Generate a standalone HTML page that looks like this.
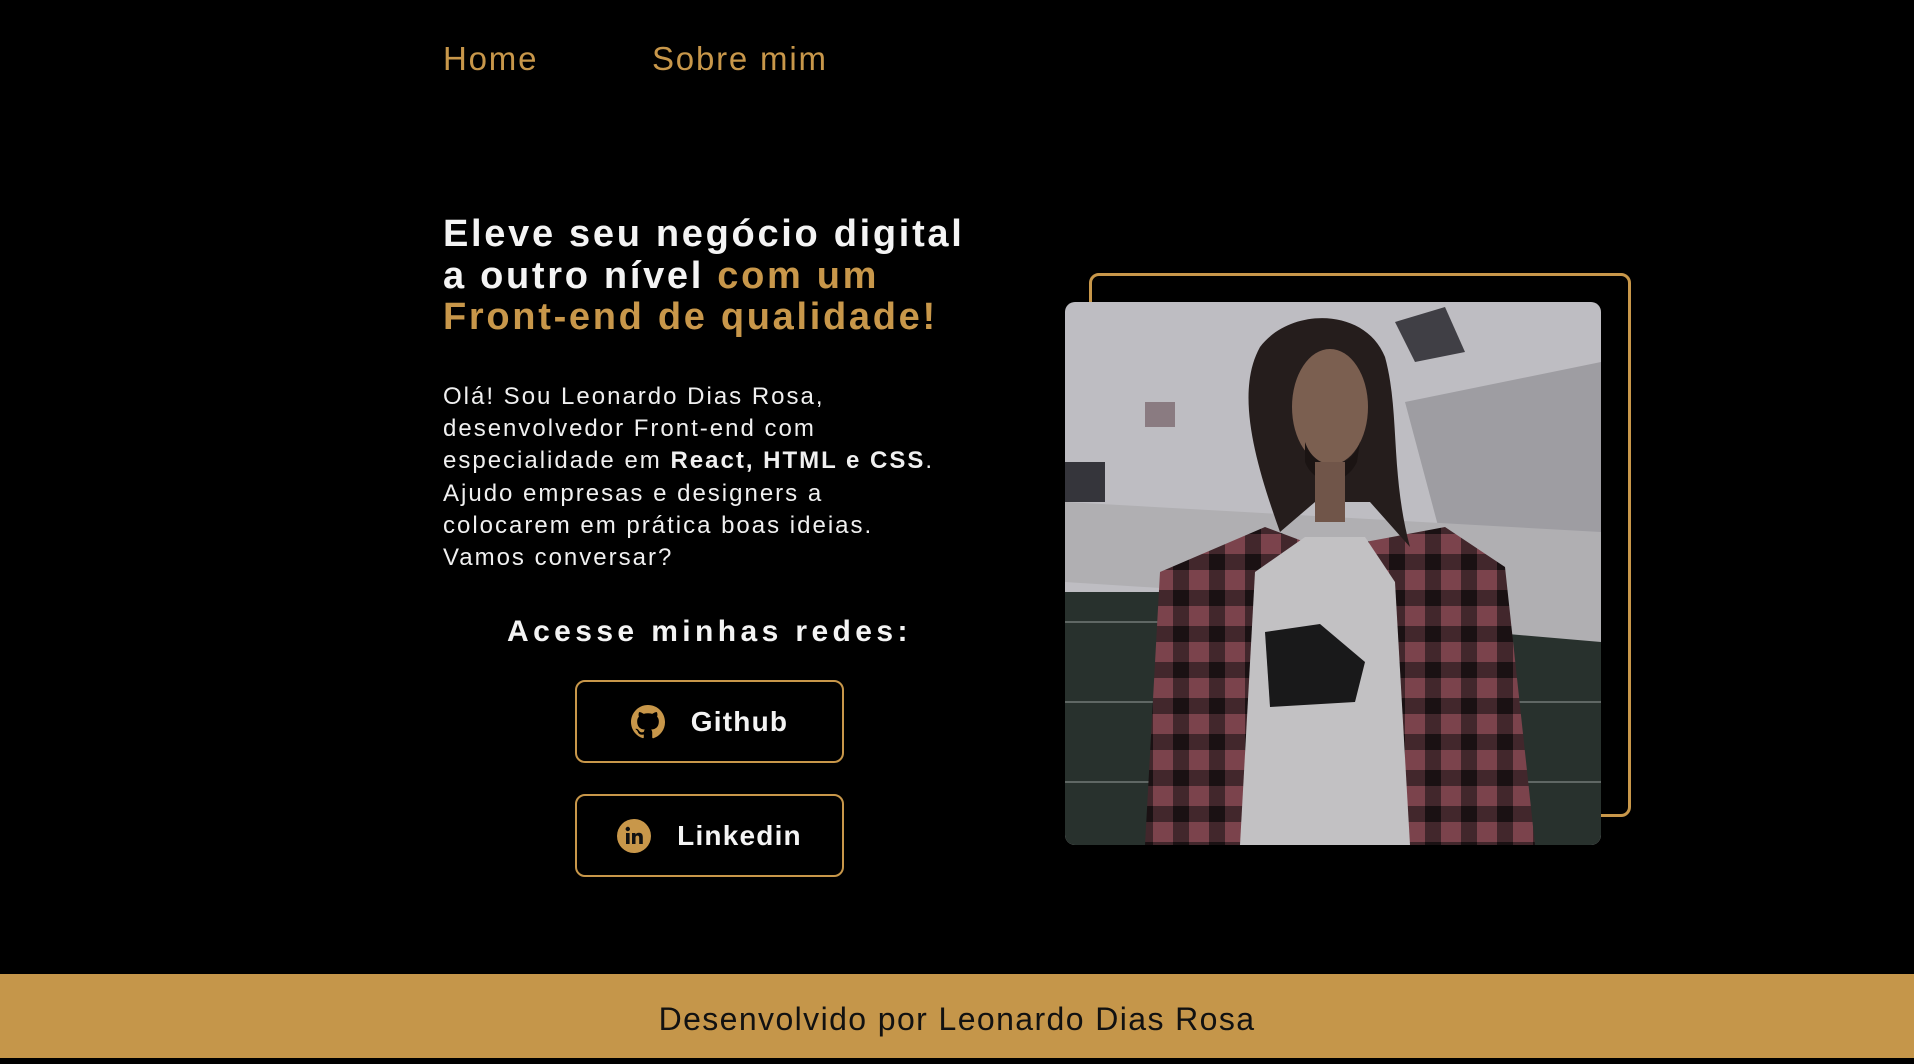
<!DOCTYPE html>
<html><head><meta charset="utf-8">
<style>
*{margin:0;padding:0;box-sizing:border-box}
html,body{width:1914px;height:1058px;background:#000;overflow:hidden;font-family:"Liberation Sans",sans-serif;color:#f4f4f4}
.nav a{position:absolute;top:40px;font-size:33px;color:#c8974a;text-decoration:none;letter-spacing:1.8px;font-weight:500}
h1{position:absolute;left:443px;top:214px;font-size:38px;line-height:41.5px;font-weight:bold;letter-spacing:2.7px;width:620px}
h1 span{color:#c8974a}
p.intro{position:absolute;left:443px;top:381px;font-size:24px;line-height:32.2px;letter-spacing:2px;width:620px;color:#f0f0f0}
p.intro b{font-weight:bold}
.redes{position:absolute;left:507px;top:615px;font-size:30px;font-weight:bold;letter-spacing:4.4px;white-space:nowrap}
.btn{position:absolute;left:575px;width:269px;height:83px;border:2px solid #c8974a;border-radius:10px;display:flex;align-items:center;justify-content:center;font-size:28px;font-weight:bold;letter-spacing:1.2px}
.btn svg{margin-right:26px}
.frame{position:absolute;left:1089px;top:273px;width:542px;height:544px;border:3px solid #c8974a;border-radius:10px}
.photo{position:absolute;left:1065px;top:302px;width:536px;height:543px;border-radius:10px;overflow:hidden}
footer{position:absolute;left:0;top:974px;width:1914px;height:84px;background:#c5964a;color:#111;font-size:32px;letter-spacing:1.4px;text-align:center;line-height:90px}
</style></head><body>
<div class="nav"><a style="left:443px">Home</a><a style="left:652px">Sobre mim</a></div>
<h1>Eleve seu negócio digital<br>a outro nível <span>com um<br>Front-end de qualidade!</span></h1>
<p class="intro">Olá! Sou Leonardo Dias Rosa,<br>desenvolvedor Front-end com<br>especialidade em <b>React, HTML e CSS</b>.<br>Ajudo empresas e designers a<br>colocarem em prática boas ideias.<br>Vamos conversar?</p>
<div class="redes">Acesse minhas redes:</div>
<div class="btn" style="top:680px"><svg width="34" height="34" viewBox="0 0 16 16"><path fill="#c8974a" d="M8 0C3.58 0 0 3.580 0 8c0 3.54 2.29 6.53 5.47 7.59.4.07.55-.17.55-.38v-1.33c-2.23.48-2.7-1.07-2.7-1.07-.36-.92-.89-1.17-.89-1.17-.73-.5.05-.49.05-.49.8.06 1.23.83 1.230.83.71 1.23 1.87.87 2.33.66.07-.52.28-.87.51-1.070-1.78-.2-3.650-.89-3.65-3.95 0-.87.31-1.59.82-2.15-.08-.2-.36-1.02.08-2.12 0 0 .67-.21 2.2.82.64-.18 1.32-.27 2-.27s1.36.09 2 .27c1.53-1.04 2.2-.82 2.2-.82.44 1.1.16 1.92.08 2.12.51.56.82 1.27.82 2.15 0 3.07-1.87 3.75-3.65 3.95.29.25.54.73.54 1.48v2.2c0 .21.15.46.55.38A8 8 0 0016 8c0-4.42-3.58-8-8-8z"/></svg>Github</div>
<div class="btn" style="top:794px"><svg width="34" height="34" viewBox="0 0 34 34"><circle cx="17" cy="17" r="17" fill="#c8974a"/><rect x="9" y="14" width="3.6" height="11" fill="#111"/><circle cx="10.8" cy="10" r="2.2" fill="#111"/><path fill="#111" d="M15 14h3.4v1.6c.6-1.1 1.9-1.9 3.6-1.9 2.8 0 3.8 1.8 3.8 4.6V25h-3.6v-6c0-1.4-.4-2.4-1.8-2.4s-1.9 1-1.9 2.4v6H15z"/></svg>Linkedin</div>
<div class="frame"></div>
<div class="photo"><svg width="536" height="543" viewBox="0 0 536 543">
<defs><pattern id="pl" width="36" height="36" patternUnits="userSpaceOnUse"><rect width="36" height="36" fill="#8a4b55"/><rect width="16" height="36" fill="#3a2428" opacity=".8"/><rect width="36" height="16" fill="#3a2428" opacity=".8"/><rect width="16" height="16" fill="#1e1416"/></pattern></defs>
<rect width="536" height="543" fill="#d4d3d8"/>
<polygon points="330,20 380,5 400,50 350,60" fill="#48474d"/>
<rect x="0" y="160" width="40" height="40" fill="#3c3b42"/>
<rect x="80" y="100" width="30" height="25" fill="#9a8a90"/>
<polygon points="340,100 536,60 536,260 380,250" fill="#b0afb5"/>
<rect x="0" y="290" width="536" height="253" fill="#2d3733"/>
<g stroke="#6a7370" stroke-width="2"><line x1="0" y1="320" x2="536" y2="320"/><line x1="0" y1="400" x2="536" y2="400"/><line x1="0" y1="480" x2="536" y2="480"/></g>
<polygon points="0,200 536,230 536,340 420,330 160,290 0,280" fill="#c4c3c7"/>
<path d="M80 543 L95 270 L200 225 L240 240 L300 240 L380 225 L440 265 L470 543 Z" fill="url(#pl)"/>
<path d="M175 543 L190 270 L240 235 L300 235 L330 280 L345 543 Z" fill="#d8d7da"/>
<path d="M200 330 L255 322 L300 360 L290 400 L205 405 Z" fill="#1c1c1e"/>
<path d="M215 230 C190 160 170 90 195 45 C225 5 300 5 320 55 C335 110 325 170 345 245 L305 200 L250 200 Z" fill="#2a2120"/>
<ellipse cx="265" cy="105" rx="38" ry="58" fill="#8a6a5a"/>
<path d="M240 140 C250 170 285 170 295 140 L292 160 C280 185 250 185 240 160Z" fill="#1f1716"/>
<rect x="250" y="160" width="30" height="60" fill="#7d5f52"/>
<rect width="536" height="543" fill="#000" opacity=".1"/>
</svg></div>
<footer>Desenvolvido por Leonardo Dias Rosa</footer>
</body></html>
